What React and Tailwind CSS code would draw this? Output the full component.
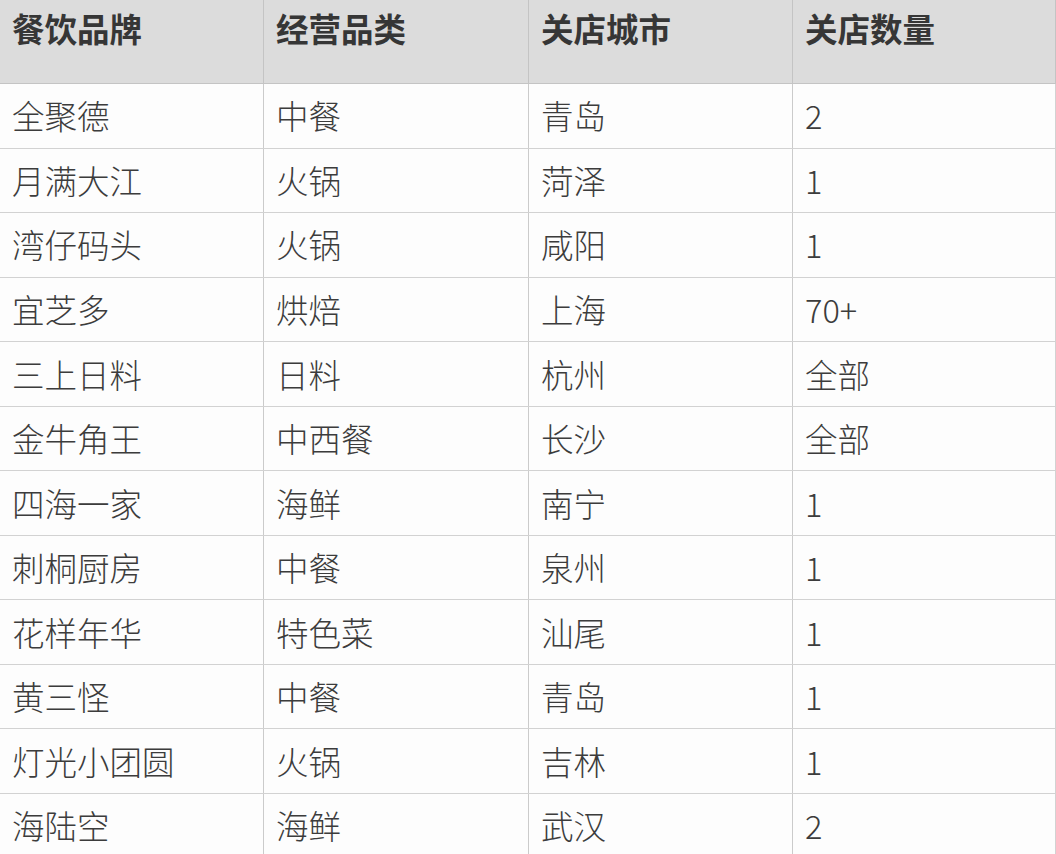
const headers = ["餐饮品牌", "经营品类", "关店城市", "关店数量"];

const rows = [
  ["全聚德", "中餐", "青岛", "2"],
  ["月满大江", "火锅", "菏泽", "1"],
  ["湾仔码头", "火锅", "咸阳", "1"],
  ["宜芝多", "烘焙", "上海", "70+"],
  ["三上日料", "日料", "杭州", "全部"],
  ["金牛角王", "中西餐", "长沙", "全部"],
  ["四海一家", "海鲜", "南宁", "1"],
  ["刺桐厨房", "中餐", "泉州", "1"],
  ["花样年华", "特色菜", "汕尾", "1"],
  ["黄三怪", "中餐", "青岛", "1"],
  ["灯光小团圆", "火锅", "吉林", "1"],
  ["海陆空", "海鲜", "武汉", "2"],
];

export default function App() {
  return (
    <div
      className="w-[1056px] h-[854px] overflow-hidden bg-[#fdfdfd] text-[#3c3c3c]"
      style={{ fontFamily: '"Noto Sans CJK SC", "Noto Sans", sans-serif' }}
    >
      {/* Header */}
      <div className="grid grid-cols-[263px_265px_264px_263px] h-[84px] bg-[#dcdcdc] border-b border-r border-[#c4c4c4]">
        {headers.map((h, i) => (
          <div
            key={h}
            className={`pl-[12px] h-full ${i > 0 ? "border-l border-[#c4c4c4]" : ""}`}
          >
            <div className="h-[56px] flex items-center text-[32.5px] font-bold text-[#363636]">
              {h}
            </div>
          </div>
        ))}
      </div>

      {/* Body rows */}
      {rows.map((r, ri) => (
        <div
          key={ri}
          className="grid grid-cols-[263px_265px_264px_263px] h-[64.55px] border-b border-r border-[#d2d2d2]"
        >
          {r.map((c, ci) => (
            <div
              key={ci}
              className={`pl-[12px] flex items-center text-[32.5px] font-light ${ci > 0 ? "border-l border-[#cbcbcb]" : ""}`}
            >
              {c}
            </div>
          ))}
        </div>
      ))}
    </div>
  );
}
